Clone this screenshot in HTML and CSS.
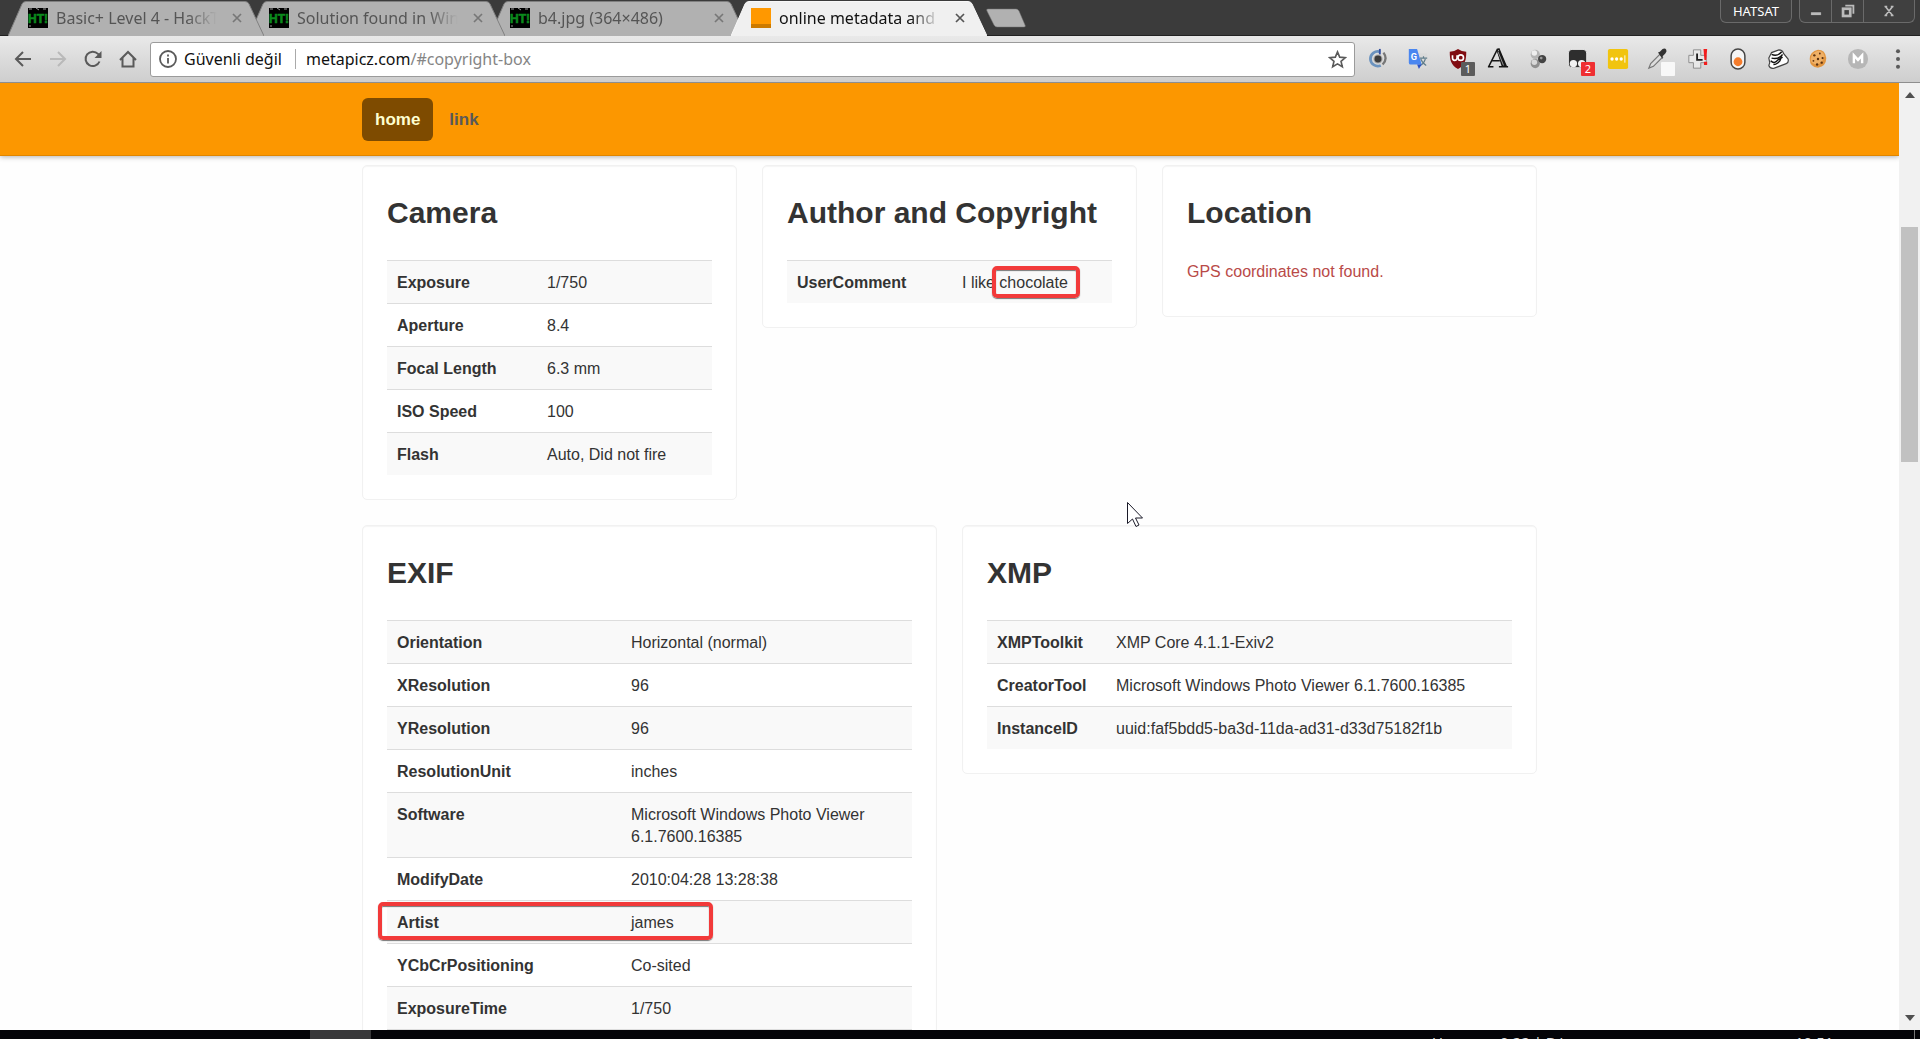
FILE: index.html
```html
<!DOCTYPE html>
<html lang="tr">
<head>
<meta charset="utf-8">
<title>online metadata and exif viewer</title>
<link rel="stylesheet" href="styles.css">
</head>
<body>
<svg class="defs" aria-hidden="true">
  <symbol id="tab-shape" viewBox="0 0 256 36"><path d="M0 36 14 4Q15 1.500 18 1.500H237Q240 1.500 241 4L256 36"/></symbol>
  <symbol id="ht" viewBox="0 0 20 20"><rect width="20" height="20" fill="#000"/><path d="M1 1h3M8 0l3 2M15 1h3M1 18h2" stroke="#9a9a9a"/><text x="0" y="15" font-family="Liberation Sans" font-weight="700" font-size="12" fill="#0b8a1c" stroke="#0b8a1c" stroke-width=".6">HT!</text></symbol>
  <symbol id="close" viewBox="0 0 12 12"><path d="M2 2l8 8M10 2l-8 8" fill="none" stroke="currentColor" stroke-width="1.700"/></symbol>
</svg>

<header class="tabstrip">
  <nav class="tabs" aria-label="Tabs">
    <div class="tab tab-1"><svg class="tab-bg"><use href="#tab-shape"/></svg><svg class="fav"><use href="#ht"/></svg><span class="tab-title">Basic+ Level 4 - HackT</span><button class="tab-close" aria-label="Close tab"><svg><use href="#close"/></svg></button></div>
    <div class="tab tab-2"><svg class="tab-bg"><use href="#tab-shape"/></svg><svg class="fav"><use href="#ht"/></svg><span class="tab-title">Solution found in Wind</span><button class="tab-close" aria-label="Close tab"><svg><use href="#close"/></svg></button></div>
    <div class="tab tab-3"><svg class="tab-bg"><use href="#tab-shape"/></svg><svg class="fav"><use href="#ht"/></svg><span class="tab-title">b4.jpg (364×486)</span><button class="tab-close" aria-label="Close tab"><svg><use href="#close"/></svg></button></div>
    <div class="tab active"><svg class="tab-bg"><use href="#tab-shape"/></svg><svg class="fav" viewBox="0 0 20 20"><path fill="#ff9800" d="M0 0h20v16H0z"/><path fill="#cc7a00" d="M0 16h20v4H0z"/></svg><span class="tab-title">online metadata and e</span><button class="tab-close" aria-label="Close tab"><svg><use href="#close"/></svg></button></div>
    <button class="new-tab" aria-label="New tab"><svg viewBox="0 0 42 20"><path d="M2 1h28q2 0 3 2l6 14q1 2-1 2H11q-2 0-3-2L1 3Q0 1 2 1z" fill="#b1b1b1" stroke="#777" stroke-width=".5"/></svg></button>
  </nav>
  <div class="window-buttons">
    <button class="profile">HATSAT</button>
    <div class="controls">
      <button aria-label="Minimize"><svg viewBox="0 0 20 20"><path d="M4 11h12v4H4z" fill="#bbb" stroke="#222" stroke-width=".6"/></svg></button>
      <button aria-label="Restore"><svg viewBox="0 0 20 20"><path d="M7 4h9v9" fill="none" stroke="#bbb" stroke-width="2"/><rect x="4.500" y="7.500" width="8" height="8" fill="none" stroke="#bbb" stroke-width="3"/></svg></button>
      <button class="close-window" aria-label="Close"><svg viewBox="0 0 20 20"><path d="M6 5l8 10M14 5L6 15M5 5h3M12 5h3M5 15h3M12 15h3" fill="none" stroke="#bbb" stroke-width="1.800"/></svg></button>
    </div>
  </div>
</header>

<div class="toolbar">
  <button class="nav-btn" aria-label="Back"><svg viewBox="0 0 20 20"><path d="M18 10H3M10 3l-7 7 7 7"/></svg></button>
  <button class="nav-btn disabled" aria-label="Forward"><svg viewBox="0 0 20 20"><path d="M2 10h15M10 3l7 7-7 7"/></svg></button>
  <button class="nav-btn" aria-label="Reload"><svg viewBox="0 0 20 20"><path d="M16.500 12.500A7.200 7.200 0 1 1 15 4.900L17 7"/><path d="M18.500 2v7h-7z" class="solid"/></svg></button>
  <button class="nav-btn" aria-label="Home"><svg viewBox="0 0 20 20"><path d="M2 11l8-8 8 8M4.500 9v8.500h11V9"/></svg></button>
  <form class="address">
    <svg class="info" viewBox="0 0 20 20"><circle cx="10" cy="10" r="8" fill="none" stroke="#5a5a5a" stroke-width="1.800"/><path d="M10 9v5.500M10 5.500v2" stroke="#5a5a5a" stroke-width="1.800"/></svg>
    <span class="security">Güvenli değil</span>
    <a class="url" href="#copyright-box">metapicz.com<span>/#copyright-box</span></a>
    <button type="button" class="star" aria-label="Bookmark"><svg viewBox="0 0 20 20"><path d="M10 2l2.300 5.500 6 .5-4.600 3.900 1.400 5.800L10 14.600l-5.100 3.100 1.400-5.800L1.700 8l6-.5z" fill="none" stroke="#5a5a5a" stroke-width="1.700"/></svg></button>
  </form>
  <div class="extensions">
    <button aria-label="Extension 1"><svg viewBox="0 0 24 24"><path d="M14.500 4.200A8 8 0 1 0 15 19" fill="none" stroke="#6b93bf" stroke-width="3"/><path d="M14 1v6" stroke="#334fa0" stroke-width="2"/><path d="M18 5q5 7-1 13" fill="none" stroke="#777" stroke-width="2.500"/><circle cx="12" cy="12" r="5" fill="#aaa"/><circle cx="12" cy="12" r="3.800" fill="#3c3c3c"/></svg></button>
    <button aria-label="Translate"><svg viewBox="0 0 24 24"><path d="M10 6h12v16H14z" fill="#dadada"/><path d="M14 11h8M18 9v2M20 12q-2 6-6 7M15 12q2 5 6 7" fill="none" stroke="#607d8b" stroke-width="1.300"/><path d="M2 1h9l5 17H4q-2 0-2-2z" fill="#4a86f0"/><path d="M11 18h5l-3 5z" fill="#2a52c8"/><text x="4" y="13" font-family="Roboto" font-weight="700" font-size="10" fill="#fff">G</text></svg></button>
    <button aria-label="uBlock"><svg viewBox="0 0 24 24"><path d="M12 1q4 3 9 3c0 9-1 14-9 19C4 18 3 13 3 4q5 0 9-3z" fill="#800c12"/><path d="M6 8v3q0 2.500 2.300 2.500T11 11V8" fill="none" stroke="#fff" stroke-width="1.800"/><circle cx="15" cy="10.500" r="3" fill="none" stroke="#fff" stroke-width="1.800"/></svg><span class="badge grey">1</span></button>
    <button aria-label="Font tool"><svg viewBox="0 0 24 24"><path d="M2 20 11 2l7 18M11 2l2-1 8 19M5 14h9" fill="none" stroke="#161616" stroke-width="1.600"/><path d="M11 4l3-1 7 17h-5z" fill="#161616"/><path d="M12 4l6 15" stroke="#ddd" stroke-width=".7"/><path d="M1 20.500h6M13 20.500h10" stroke="#161616" stroke-width="1.500"/></svg></button>
    <button aria-label="Extension 5"><svg viewBox="0 0 24 24"><circle cx="9" cy="7" r="5" fill="#b4b4b4"/><circle cx="8" cy="5.500" r="3" fill="#eee"/><circle cx="9" cy="17" r="5" fill="#909090"/><circle cx="8" cy="15.500" r="3" fill="#d8d8d8"/><circle cx="16.500" cy="12" r="4.500" fill="#444"/><circle cx="15.500" cy="11" r="1.500" fill="#999"/></svg></button>
    <button aria-label="Tampermonkey"><svg viewBox="0 0 24 24"><rect x="1.500" y="1.500" width="20" height="20" rx="4" fill="#2e2e2e" stroke="#eee"/><circle cx="7" cy="17" r="4" fill="#f2f2f2"/><circle cx="16" cy="17" r="4" fill="#f2f2f2"/></svg><span class="badge red">2</span></button>
    <button aria-label="Password manager"><svg viewBox="0 0 24 24"><rect x="1" y="1" width="22" height="22" rx="2" fill="#f1c40f"/><circle cx="5.500" cy="12" r="1.800" fill="#fff"/><circle cx="10.500" cy="12" r="1.800" fill="#fff"/><circle cx="15.500" cy="12" r="1.800" fill="#fff"/><path d="M19.500 8v8" stroke="#fff"/></svg></button>
    <button aria-label="Color picker"><svg viewBox="0 0 24 24"><path d="M2 22l2-5L14 7l3 3L7 20z" fill="#ddd" stroke="#777" stroke-width="1.300"/><path d="M12 5l2-1 3-3q3-1 4 1 1 2-1 4l-3 3v3z" fill="#333"/></svg><span class="badge white"></span></button>
    <button aria-label="Health check"><svg viewBox="0 0 24 24"><path d="M7 2h8v6h6v8h-6v6H7v-6H2V8h5z" fill="#e8e8e8" stroke="#888"/><path d="M11 6v7h6" fill="none" stroke="#222" stroke-width="2"/><path d="M18 1h4l-1 12h-2zM18.500 15h3.500v3.500h-3.500z" fill="#f21c1c"/></svg></button>
    <button aria-label="Toggle"><svg viewBox="0 0 24 24"><rect x="4.500" y="1" width="15" height="22" rx="7.500" fill="#f5f5f5" stroke="#444" stroke-width="1.600"/><circle cx="12" cy="15" r="4.800" fill="#f47c2c"/></svg></button>
    <button aria-label="Fist"><svg viewBox="0 0 24 24"><path d="M2 11 5 5l8-3q4 0 5 4l5 6q1 4-2 5L8 22q-5 1-6-3l1-3z" fill="#fff" stroke="#444" stroke-width="1.300"/><path d="M5 7q6 3 11-3M5 11q7 2 12-4M4 14q4 4 8-1l5-3M7 18q4 0 7-4l2-5" fill="none" stroke="#111" stroke-width="1.600"/></svg></button>
    <button aria-label="Cookies"><svg viewBox="0 0 24 24"><path d="M12 2q8 0 9 9 0 9-9 10.500Q3 21 3 12 3 4 12 2z" fill="#e2953f"/><path d="M12 3q6 0 7 6-2 8-9 9-6-1-6-6 1-7 8-9z" fill="#efb066"/><g fill="#5c3211"><circle cx="8" cy="8" r="1.300"/><circle cx="14" cy="6" r="1"/><circle cx="12" cy="12" r="1.300"/><circle cx="17" cy="11" r="1.200"/><circle cx="7" cy="14" r="1"/><circle cx="11" cy="18" r="1.300"/><circle cx="16" cy="16" r="1.300"/></g></svg></button>
    <button aria-label="Gmail checker"><svg viewBox="0 0 24 24"><circle cx="12" cy="12" r="11" fill="#b6b6b6"/><path d="M7.500 16.500V8l4.500 5 4.500-5v8.500" fill="none" stroke="#fff" stroke-width="2.600"/></svg></button>
    <button aria-label="Menu"><svg viewBox="0 0 24 24" fill="#5a5a5a"><circle cx="12" cy="3.500" r="2.200"/><circle cx="12" cy="12" r="2.200"/><circle cx="12" cy="20.500" r="2.200"/></svg></button>
  </div>
</div>

<div class="viewport">
  <div class="page">
    <div class="navbar">
      <nav class="container nav-links"><a class="current" href="#home">home</a><a href="#link">link</a></nav>
    </div>
    <main class="container">
      <div class="row three">
        <section class="card">
          <h2>Camera</h2>
          <table class="camera">
            <tr><th scope="row">Exposure</th><td>1/750</td></tr>
            <tr><th scope="row">Aperture</th><td>8.4</td></tr>
            <tr><th scope="row">Focal Length</th><td>6.3 mm</td></tr>
            <tr><th scope="row">ISO Speed</th><td>100</td></tr>
            <tr><th scope="row">Flash</th><td>Auto, Did not fire</td></tr>
          </table>
        </section>
        <section class="card" id="copyright-box">
          <h2>Author and Copyright</h2>
          <table class="author">
            <tr><th scope="row">UserComment</th><td>I like <span class="marked">chocolate</span></td></tr>
          </table>
        </section>
        <section class="card">
          <h2>Location</h2>
          <p class="error">GPS coordinates not found.</p>
        </section>
      </div>
      <div class="row two">
        <section class="card">
          <h2>EXIF</h2>
          <table class="exif">
            <tr><th scope="row">Orientation</th><td>Horizontal (normal)</td></tr>
            <tr><th scope="row">XResolution</th><td>96</td></tr>
            <tr><th scope="row">YResolution</th><td>96</td></tr>
            <tr><th scope="row">ResolutionUnit</th><td>inches</td></tr>
            <tr><th scope="row">Software</th><td>Microsoft Windows Photo Viewer 6.1.7600.16385</td></tr>
            <tr><th scope="row">ModifyDate</th><td>2010:04:28 13:28:38</td></tr>
            <tr class="marked-row"><th scope="row">Artist</th><td>james</td></tr>
            <tr><th scope="row">YCbCrPositioning</th><td>Co-sited</td></tr>
            <tr><th scope="row">ExposureTime</th><td>1/750</td></tr>
            <tr><th scope="row">FNumber</th><td>8.4</td></tr>
          </table>
        </section>
        <section class="card">
          <h2>XMP</h2>
          <table class="xmp">
            <tr><th scope="row">XMPToolkit</th><td>XMP Core 4.1.1-Exiv2</td></tr>
            <tr><th scope="row">CreatorTool</th><td>Microsoft Windows Photo Viewer 6.1.7600.16385</td></tr>
            <tr><th scope="row">InstanceID</th><td>uuid:faf5bdd5-ba3d-11da-ad31-d33d75182f1b</td></tr>
          </table>
        </section>
      </div>
    </main>
    <svg class="cursor" viewBox="0 0 17 25"><path d="M.5.500v21l5-4.500 3.500 7.500 3-1.500-3.500-7h7z" fill="#fff" stroke="#1a1a28"/></svg>
  </div>
  <div class="scrollbar">
    <svg viewBox="0 0 10 6"><path d="M0 6l5-6 5 6z" fill="#505050"/></svg>
    <div class="track"><div class="thumb"></div></div>
    <svg viewBox="0 0 10 6"><path d="M0 0l5 6 5-6z" fill="#505050"/></svg>
  </div>
</div>

<footer class="taskbar">
  <span class="task"></span>
  <span class="net">U:</span><span class="speed">0.22 | D/</span><span class="clock">10:51</span><span class="peek"></span>
</footer>
</body>
</html>
```
FILE: styles.css
```css
*, *::after { box-sizing: border-box; }
body {
  margin: 0;
  height: 100vh;
  display: flex;
  flex-direction: column;
  overflow: hidden;
  font: 16px/22px "Liberation Sans", Arial, sans-serif;
  color: #333;
}
button { padding: 0; border: 0; background: none; font: inherit; color: inherit; }
svg { display: block; }
.defs { position: absolute; width: 0; height: 0; }

/* Tab strip */
.tabstrip {
  flex: none;
  height: 36px;
  display: flex;
  justify-content: space-between;
  background: #3b3b3b;
  box-shadow: inset 0 -1px #222;
  font: 16px/20px "Noto Sans", "Open Sans", sans-serif;
}
.tabs { display: flex; padding-left: 8px; }
.tab {
  position: relative;
  width: 256px;
  height: 36px;
  margin-right: -15px;
  padding: 0 20px;
  display: flex;
  align-items: center;
  color: #555;
}
.tab-1 { z-index: 3; }
.tab-2 { z-index: 2; }
.tab-3 { z-index: 1; }
.tab.active { z-index: 4; color: #111; }
.tab-bg {
  position: absolute;
  left: 0;
  top: 0;
  width: 256px;
  height: 36px;
  fill: #b1b1b1;
  stroke: #808080;
}
.active .tab-bg { fill: #f0f0f0; stroke: #f8f8f8; }
.fav { position: relative; width: 20px; height: 20px; margin-right: 8px; }
.tab-title {
  position: relative;
  width: 164px;
  overflow: hidden;
  white-space: nowrap;
  -webkit-mask-image: linear-gradient(90deg, #000 80%, transparent 98%);
  mask-image: linear-gradient(90deg, #000 80%, transparent 98%);
}
.tab-close { position: relative; margin-left: 11px; color: #777; }
.tab-close svg { width: 12px; height: 12px; }
.active .tab-close { color: #555; }
.new-tab { margin-left: 14px; align-self: center; }
.new-tab svg { width: 42px; height: 20px; }
.window-buttons { display: flex; gap: 7px; padding-right: 5px; }
.profile, .controls {
  height: 23px;
  border: 1px solid #6a6a6a;
  border-top: 0;
  border-radius: 0 0 6px 6px;
  background: #404040;
}
.profile { width: 72px; color: #fff; font-size: 13px; }
.controls { width: 116px; display: flex; }
.controls button { width: 32px; display: grid; place-items: center; border-right: 1px solid #6a6a6a; }
.controls .close-window { flex: 1; border: 0; }
.controls svg { width: 18px; height: 18px; }

/* Toolbar */
.toolbar {
  flex: none;
  height: 47px;
  display: flex;
  align-items: center;
  padding: 0 2px 0 5px;
  background: linear-gradient(#e9e9e9, #cecece);
  border-bottom: 1px solid #8e8e8e;
}
.nav-btn { width: 35px; display: grid; place-items: center; }
.nav-btn svg { width: 20px; height: 20px; fill: none; stroke: #5a5a5a; stroke-width: 2; }
.nav-btn .solid { fill: #5a5a5a; stroke: none; }
.disabled svg { stroke: #b9b9b9; }
.address {
  flex: 1;
  height: 35px;
  margin: 0 3px 0 5px;
  padding: 0 7px;
  display: flex;
  align-items: center;
  background: #fff;
  border: 1px solid #9b9b9b;
  border-radius: 3px;
  font: 16px/22px "Noto Sans", "Open Sans", sans-serif;
  color: #111;
}
.info { width: 20px; height: 20px; margin-right: 6px; }
.security { padding-right: 13px; border-right: 1px solid #aaa; line-height: 20px; }
.url { flex: 1; padding-left: 10px; color: #111; text-decoration: none; }
.url span { color: #858585; }
.star svg { width: 19px; height: 19px; }
.extensions { display: flex; }
.extensions button { position: relative; width: 40px; height: 36px; display: grid; place-items: center; }
.extensions svg { width: 22px; height: 22px; }
.badge {
  position: absolute;
  left: 23px;
  top: 21px;
  width: 14px;
  height: 14px;
  border-radius: 1px;
  color: #fff;
  font: 11px/14px "Noto Sans", sans-serif;
  text-align: center;
}
.grey { background: #5c5c5c; }
.red { background: #ef2f32; }
.white { background: #f8f8f8; }

/* Page */
.viewport { flex: 1; min-height: 0; display: flex; }
.page { position: relative; flex: 1; overflow: hidden; background: #fefefe; }
.container { width: 1175px; max-width: 100%; margin: 0 auto; }
.navbar {
  padding: 15px 0 14px;
  background: #fc9700;
  border-bottom: 1px solid #e08600;
  box-shadow: 0 1px 5px rgba(0, 0, 0, .3);
}
.nav-links { display: flex; gap: 3px; }
.nav-links a {
  padding: 11px 13px 10px;
  border-radius: 6px;
  color: #595959;
  font-size: 17px;
  font-weight: 700;
  text-decoration: none;
}
.nav-links .current { background: #7e4b00; color: #ffffd0; }
main { padding-top: 9px; }
.row { display: grid; gap: 25px; align-items: start; margin-bottom: 25px; }
.three { grid-template-columns: repeat(3, 1fr); }
.two { grid-template-columns: repeat(2, 1fr); }
.card {
  padding: 24px;
  border: 1px solid #f1f1f1;
  border-radius: 5px;
  background: #fff;
  box-shadow: inset 0 1px 1px rgba(0, 0, 0, .04);
}
h2 { margin: 0 0 25px; font-size: 30px; line-height: 45px; }
table { width: 100%; table-layout: fixed; border-spacing: 0; }
th, td { padding: 11px 10px 9px; border-top: 1px solid #ddd; text-align: left; vertical-align: top; }
tr:nth-child(odd) { background: #f9f9f9; }
.camera th { width: 150px; }
.author th { width: 165px; }
.exif th { width: 234px; }
.xmp th { width: 119px; }
.error { margin: 0; padding: 1px 0 9px; color: #b94a48; }

/* Red highlight frames */
.marked, .marked-row th { position: relative; }
.marked::after, .marked-row th::after {
  content: "";
  position: absolute;
  border: 4px solid #f23a3a;
  border-radius: 5px;
  box-shadow: 0 1px 1px #777, inset 0 1px 1px #777;
}
.marked::after { inset: -8px -12px -7px -7px; }
.marked-row th::after { left: -9px; top: 1px; width: 335px; height: 38px; }
.cursor { position: absolute; left: 1127px; top: 419px; width: 17px; height: 25px; }

.scrollbar {
  flex: none;
  width: 21px;
  padding: 9px 2px;
  display: flex;
  flex-direction: column;
  align-items: center;
  background: #f1f1f1;
}
.scrollbar svg { width: 10px; height: 6px; }
.track { flex: 1; width: 17px; padding: 129px 0 0; }
.thumb { height: 235px; background: #c1c1c1; }

/* Taskbar */
.taskbar {
  flex: none;
  height: 9px;
  display: flex;
  padding-right: 5px;
  overflow: hidden;
  background: #040408;
  color: #ddd;
  font: 15px/24px "Noto Sans", sans-serif;
}
.task { width: 61px; margin-left: 310px; background: #38383a; }
.net { margin-left: auto; width: 68px; }
.speed { width: 295px; }
.clock { width: 119px; }
.peek { border-left: 1px solid #777; }
```
